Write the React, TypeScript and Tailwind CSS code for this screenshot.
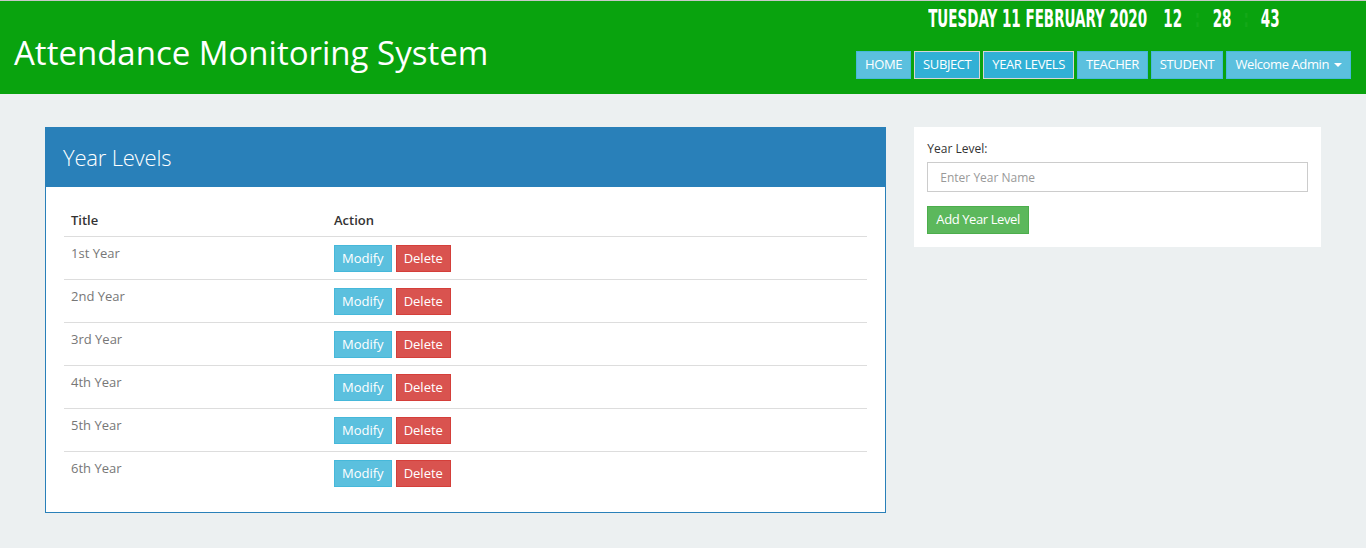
import React from "react";

const rows = ["1st Year", "2nd Year", "3rd Year", "4th Year", "5th Year", "6th Year"];

function NavBtn({ label, active, caret }: { label: string; active?: boolean; caret?: boolean }) {
  return (
    <div
      className={
        "h-[28px] flex items-center px-[8px] text-[13px] tracking-[-0.4px] text-white border " +
        (active ? "bg-[#31b0d5] border-[#d6d6d6]" : "bg-[#5bc0de] border-[#46b8da]")
      }
    >
      {label}
      {caret && (
        <span className="ml-[5px] inline-block w-0 h-0 border-l-[4px] border-r-[4px] border-t-[4px] border-l-transparent border-r-transparent border-t-white" />
      )}
    </div>
  );
}

export default function App() {
  return (
    <div className="min-h-[548px] bg-[#ecf0f1] text-[#333]" style={{ fontFamily: '"Open Sans", sans-serif' }}>
      <header className="h-[94px] bg-[#09a30e] border-t border-[#c8c8c8] flex justify-between">
        <h1 className="pl-[14px] pt-[29px] text-[33px] leading-[46px] text-white font-normal">
          Attendance Monitoring System
        </h1>
        <div className="pr-[15px] flex flex-col items-center">
          <div className="w-0 h-[36px] pt-[1px] pb-[1px] flex justify-center items-center">
            <span
              className="inline-block scale-x-[0.6] origin-center whitespace-nowrap text-white font-bold uppercase text-[25px] leading-[30px]"
              style={{ fontFamily: '"Liberation Sans Narrow", "DejaVu Sans Condensed", sans-serif' }}
            >
              Tuesday 11 February 2020
              <span className="ml-[27px]">12</span>
              <span className="mx-[21px] text-[#14a818]">:</span>
              <span>28</span>
              <span className="mx-[20px] text-[#14a818]">:</span>
              <span>43</span>
            </span>
          </div>
          <nav className="mt-[14px] flex gap-[3px]">
            <NavBtn label="HOME" />
            <NavBtn label="SUBJECT" active />
            <NavBtn label="YEAR LEVELS" active />
            <NavBtn label="TEACHER" />
            <NavBtn label="STUDENT" />
            <NavBtn label="Welcome Admin" caret />
          </nav>
        </div>
      </header>

      <main className="pt-[33px] px-[45px] flex gap-[28px] items-start">
        <section className="w-[842px] border border-[#2980b9] bg-white">
          <div className="h-[59px] bg-[#2980b9] flex items-center pl-[17px]">
            <h2 className="text-[22px] font-light text-white tracking-[-0.2px]">Year Levels</h2>
          </div>
          <div className="px-[18px] pt-[16px] pb-[18px]">
            <table className="w-full text-[13px] border-collapse">
              <thead>
                <tr className="border-b border-[#dddddd]">
                  <th className="w-[262px] text-left font-semibold px-[7px] pt-[8px] pb-[7px] leading-[18px]">Title</th>
                  <th className="text-left font-semibold px-[8px] pt-[8px] pb-[7px] leading-[18px]">Action</th>
                </tr>
              </thead>
              <tbody>
                {rows.map((r, i) => (
                  <tr key={r} className={i < rows.length - 1 ? "border-b border-[#dddddd]" : ""}>
                    <td className="align-top px-[7px] pt-[7px] pb-[7px] text-[#777] leading-[18px]">{r}</td>
                    <td className="align-top px-[8px] pt-[8px] pb-[7px]">
                      <div className="flex gap-[4px]">
                        <button className="h-[27px] px-[7px] bg-[#5bc0de] border border-[#46b8da] text-white text-[13px]">
                          Modify
                        </button>
                        <button className="h-[27px] px-[7px] bg-[#d9534f] border border-[#d43f3a] text-white text-[13px]">
                          Delete
                        </button>
                      </div>
                    </td>
                  </tr>
                ))}
              </tbody>
            </table>
          </div>
        </section>

        <aside className="w-[407px] bg-white px-[13px] pt-[14px] pb-[13px]">
          <label className="block text-[12px] leading-[16px] mb-[5px] text-[#333]">Year Level:</label>
          <input
            placeholder="Enter Year Name"
            className="w-full h-[30px] border border-[#ccc] px-[12px] text-[12px] placeholder:text-[#999] outline-none"
          />
          <button className="mt-[14px] h-[28px] px-[8px] bg-[#5cb85c] border border-[#4cae4c] text-white text-[13px] tracking-[-0.4px]">
            Add Year Level
          </button>
        </aside>
      </main>
    </div>
  );
}
